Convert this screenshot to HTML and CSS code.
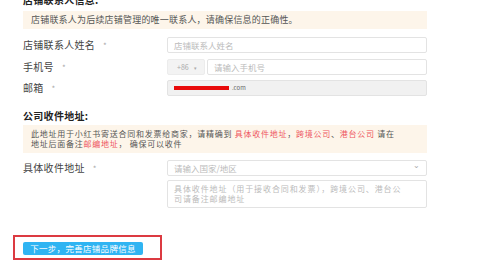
FILE: index.html
```html
<!DOCTYPE html>
<html lang="zh-CN">
<head>
  <meta charset="utf-8">
  <title>店铺信息</title>
  <link rel="stylesheet" href="styles.css">
</head>
<body>
  <div class="page">
    <div class="section-title section-title-top">店铺联系人信息:</div>
    <div class="notice">店铺联系人为后续店铺管理的唯一联系人，请确保信息的正确性。</div>

    <div class="form-row">
      <label class="form-label">店铺联系人姓名<i class="req">*</i></label>
      <div class="control"><div class="input placeholder">店铺联系人姓名</div></div>
    </div>
    <div class="form-row">
      <label class="form-label">手机号<i class="req">*</i></label>
      <div class="control control-phone">
        <div class="prefix">+86<span class="caret">▾</span></div>
        <div class="input placeholder">请输入手机号</div>
      </div>
    </div>
    <div class="form-row">
      <label class="form-label">邮箱<i class="req">*</i></label>
      <div class="control"><div class="input input-disabled"><span class="redact"></span><span class="mail-end">.com</span></div></div>
    </div>

    <div class="section-title">公司收件地址:</div>
    <div class="notice notice-tall">
      <p>此地址用于小红书寄送合同和发票给商家，请精确到 <em>具体收件地址</em>，<em>跨境公司</em>、<em>港台公司</em> 请在</p>
      <p>地址后面备注<em>邮编地址</em>， 确保可以收件</p>
    </div>

    <div class="form-row">
      <label class="form-label">具体收件地址<i class="req">*</i></label>
      <div class="control control-address">
        <div class="input select placeholder">请输入国家/地区<span class="chevron">⌄</span></div>
        <div class="input textarea placeholder">具体收件地址（用于接收合同和发票），跨境公司、港台公司请备注邮编地址</div>
      </div>
    </div>

    <div class="actions">
      <button class="next">下一步，完善店铺品牌信息</button>
    </div>
  </div>
</body>
</html>
```

FILE: styles.css
```css
body {
  margin: 0;
  background: #fff;
  color: #333;
  font-family: "Noto Sans CJK SC", "Noto Sans", sans-serif;
  overflow: hidden;
}

.page {
  width: 404px;
  padding-left: 23px;
}

.section-title {
  font-size: 10px;
  font-weight: bold;
  line-height: 12px;
  height: 12px;
  color: #222;
  margin-top: 13px;
  margin-bottom: 3px;
  letter-spacing: 0.3px;
}
.section-title-top {
  margin-top: -6px;
  margin-bottom: 5px;
}

.notice {
  background: #fdf5ea;
  color: #555;
  font-size: 9px;
  line-height: 18px;
  height: 18px;
  padding: 0 8px;
  letter-spacing: 0.2px;
  margin-bottom: 8px;
}
.notice-tall {
  height: 28px;
  padding: 4px 8px 0 8px;
  box-sizing: border-box;
  margin-bottom: 7px;
  font-size: 8px;
  letter-spacing: 0.75px;
}
.notice-tall p {
  margin: 0;
  height: 10px;
  line-height: 10px;
  white-space: nowrap;
}
.notice em {
  font-style: normal;
  color: #ee5560;
}

.form-row {
  display: flex;
  align-items: flex-start;
  margin-bottom: 4.5px;
}
.form-label {
  width: 144px;
  flex: none;
  font-size: 10px;
  line-height: 16px;
  color: #444;
  letter-spacing: 0.3px;
}
.req {
  font-style: normal;
  color: #aaa;
  font-size: 8px;
  margin-left: 8px;
}

.control {
  flex: 1;
  display: flex;
  gap: 2px;
}
.control-address {
  flex-direction: column;
  gap: 4px;
}

.input {
  flex: 1;
  box-sizing: border-box;
  height: 16px;
  border: 1px solid #e3e3e3;
  border-radius: 2px;
  padding: 0 6px;
  font-size: 8.5px;
  line-height: 14px;
  color: #333;
  position: relative;
}
.placeholder {
  color: #bbb;
}
.input-disabled {
  background: #f1f1f1;
  display: flex;
  align-items: center;
  gap: 3px;
}
.redact {
  width: 55px;
  height: 4px;
  background: #e80a0a;
}
.mail-end {
  font-size: 6px;
  color: #666;
}

.prefix {
  width: 38px;
  flex: none;
  box-sizing: border-box;
  height: 16px;
  background: #f3f3f3;
  border: 1px solid #ececec;
  border-radius: 2px;
  font-size: 7px;
  line-height: 14px;
  color: #aaa;
  padding-left: 9px;
}
.caret {
  font-size: 5px;
  margin-left: 5px;
}

.select .chevron {
  position: absolute;
  right: 6px;
  top: -3px;
  font-size: 8px;
  color: #aaa;
}
.textarea {
  height: 28px;
  flex: none;
  padding: 3px 16px 0 6px;
  line-height: 9.5px;
  font-size: 8px;
  letter-spacing: 0.9px;
}

.actions {
  margin: 27px 0 0 -10px;
  width: 149px;
  height: 25px;
  box-sizing: border-box;
  border: 2px solid #dc3a41;
  padding: 5px 0 0 8px;
}
.next {
  display: block;
  width: 120px;
  height: 13px;
  border: none;
  border-radius: 2px;
  background: #2fb4f2;
  color: #fff;
  font-family: inherit;
  font-size: 8.5px;
  line-height: 13px;
  padding: 0;
  letter-spacing: 0.3px;
}
```
